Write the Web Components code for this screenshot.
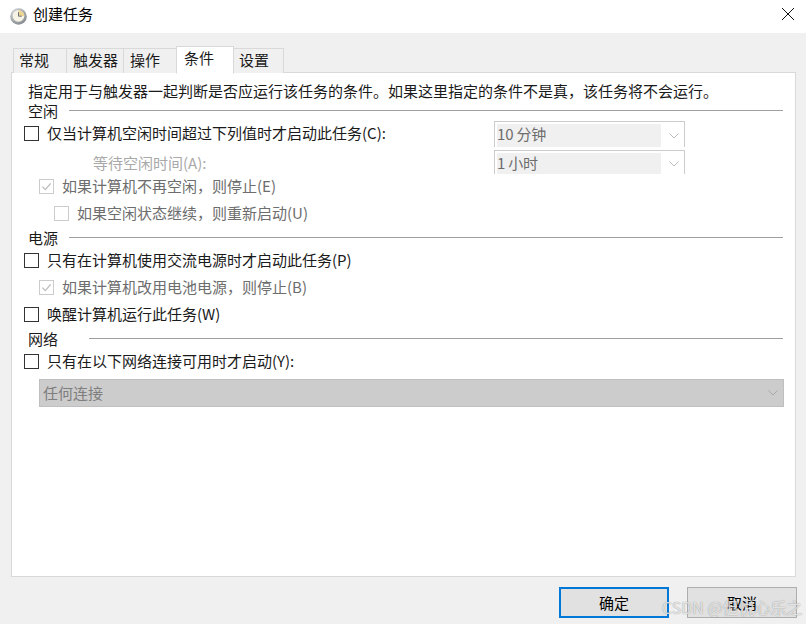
<!DOCTYPE html>
<html lang="zh-CN">
<head>
<meta charset="utf-8">
<title>创建任务</title>
<style>
  html, body { margin: 0; padding: 0; }
  body { font: 15px/20px "Noto Sans CJK SC", "Liberation Sans", sans-serif; color: #1a1a1a; }
</style>
</head>
<body>
<task-dialog>
  <title-bar slot="title">创建任务</title-bar>
  <tab-strip slot="tabs"></tab-strip>

  <intro-text>指定用于与触发器一起判断是否应运行该任务的条件。如果这里指定的条件不是真，该任务将不会运行。</intro-text>

  <section-head>空闲</section-head>
  <option-row style="--mt:2px">
    <check-box label="仅当计算机空闲时间超过下列值时才启动此任务(C):"></check-box>
    <combo-box slot="right" value="10 分钟" h="26" lh="20" style="margin-top:-2px"></combo-box>
  </option-row>
  <option-row style="--mt:10px">
    <span style="padding-left:69px;color:#a9a9a9">等待空闲时间(A):</span>
    <combo-box slot="right" value="1 小时" h="24" lh="20" style="margin-top:-3px"></combo-box>
  </option-row>
  <option-row style="--mt:3px"><check-box indent="15" disabled checked label="如果计算机不再空闲，则停止(E)"></check-box></option-row>
  <option-row style="--mt:7px"><check-box indent="30" disabled label="如果空闲状态继续，则重新启动(U)"></check-box></option-row>

  <section-head style="--mt:5px">电源</section-head>
  <option-row style="--mt:2px"><check-box label="只有在计算机使用交流电源时才启动此任务(P)"></check-box></option-row>
  <option-row style="--mt:7px"><check-box indent="15" disabled checked label="如果计算机改用电池电源，则停止(B)"></check-box></option-row>
  <option-row style="--mt:7px"><check-box label="唤醒计算机运行此任务(W)"></check-box></option-row>

  <section-head style="--mt:5px;--gap:31px">网络</section-head>
  <option-row style="--mt:2px"><check-box label="只有在以下网络连接可用时才启动(Y):"></check-box></option-row>
  <network-select value="任何连接"></network-select>

  <dlg-button slot="buttons" primary>确定</dlg-button>
  <dlg-button slot="buttons" disabled>取消</dlg-button>
</task-dialog>

<script>
class TaskDialog extends HTMLElement {
  constructor() {
    super();
    this.attachShadow({ mode: "open" }).innerHTML = `
      <style>
        :host {
          display: flex;
          flex-direction: column;
          position: relative;
          width: 806px;
          height: 624px;
          overflow: hidden;
          background: #f0f0f0;
        }
        .panel {
          display: flex;
          flex-direction: column;
          box-sizing: border-box;
          height: 505px;
          margin: -1px 10px 0 11px;
          padding: 8px 12px 0 12px;
          background: #fff;
          border: 1px solid #d9d9d9;
        }
        .buttons {
          display: flex;
          justify-content: flex-end;
          gap: 18px;
          padding: 10px 9px 0 0;
        }
        .mark {
          position: absolute;
          left: 662px;
          top: 597px;
          font-size: 16px;
          line-height: 20px;
          color: rgba(255,255,255,.75);
          text-shadow: 0 0 1px rgba(90,90,90,.75);
          white-space: nowrap;
        }
      </style>
      <slot name="title"></slot>
      <slot name="tabs"></slot>
      <div class="panel"><slot></slot></div>
      <div class="buttons"><slot name="buttons"></slot></div>
      <div class="mark">CSDN @但悦心乐之</div>
    `;
  }
}

class TitleBar extends HTMLElement {
  constructor() {
    super();
    this.attachShadow({ mode: "open" }).innerHTML = `
      <style>
        :host {
          display: flex;
          align-items: center;
          height: 33px;
          background: #fff;
          padding-left: 10px;
          color: #000;
        }
        .icon { width: 17px; height: 17px; margin-right: 6px; }
        .title { flex: 1; position: relative; top: -3px; }
        .close { width: 14px; height: 14px; margin-right: 11px; margin-top: -6px; }
      </style>
      <svg class="icon" viewBox="0 0 17 17">
        <defs>
          <radialGradient id="rim" cx=".35" cy=".3" r=".8">
            <stop offset="0" stop-color="#dfe1e3"/>
            <stop offset="1" stop-color="#7d8388"/>
          </radialGradient>
        </defs>
        <circle cx="8.500" cy="8.500" r="8.300" fill="url(#rim)"/>
        <circle cx="8.500" cy="8" r="5.800" fill="#f7f4e6"/>
        <path d="M8.500 2.200a5.800 5.800 0 0 1 5.800 5.800H8.500z" fill="#ecd592"/>
        <path d="M8.500 4.200v4h3.300" fill="none" stroke="#6a6f74" stroke-width="1"/>
      </svg>
      <span class="title"><slot></slot></span>
      <svg class="close" viewBox="0 0 14 14">
        <path d="M1 1l12 12M13 1L1 13" stroke="#111" stroke-width="1" fill="none"/>
      </svg>
    `;
  }
}

class TabStrip extends HTMLElement {
  constructor() {
    super();
    const tabs = [["常规", 54, 5, 0], ["触发器", 58, 6, 0], ["操作", 54, 6, 0], ["条件", 58, 7, 1], ["设置", 51, 5, 0]];
    const items = tabs.map(([text, w, pad, on]) =>
      `<div class="tab${on ? " on" : ""}" style="width:${w}px;padding-left:${pad}px">${text}</div>`).join("");
    this.attachShadow({ mode: "open" }).innerHTML = `
      <style>
        :host {
          display: flex;
          align-items: flex-end;
          height: 40px;
          padding-left: 13px;
          position: relative;
          z-index: 1;
        }
        .tab {
          box-sizing: border-box;
          height: 25px;
          line-height: 22px;
          background: #f0f0f0;
          border: 1px solid #d9d9d9;
          border-bottom: 0;
          margin-right: -1px;
          color: #1a1a1a;
          white-space: nowrap;
        }
        .tab.on {
          height: 28px;
          line-height: 22px;
          background: #fff;
          margin-bottom: -1px;
          position: relative;
          z-index: 1;
          border-bottom: 1px solid #fff;
        }
      </style>
      ${items}
    `;
  }
}

class IntroText extends HTMLElement {
  constructor() {
    super();
    this.attachShadow({ mode: "open" }).innerHTML = `
      <style>
        :host { display: block; padding-left: 4px; height: 20px; white-space: nowrap; }
      </style>
      <slot></slot>
    `;
  }
}

class SectionHead extends HTMLElement {
  constructor() {
    super();
    this.attachShadow({ mode: "open" }).innerHTML = `
      <style>
        :host {
          display: flex;
          align-items: center;
          height: 20px;
          margin-top: var(--mt, 0);
          padding-left: 4px;
          white-space: nowrap;
        }
        .rule {
          flex: 1;
          height: 1px;
          margin-left: var(--gap, 11px);
          margin-top: -2px;
          background: #a0a0a0;
        }
      </style>
      <slot></slot>
      <div class="rule"></div>
    `;
  }
}

class OptionRow extends HTMLElement {
  constructor() {
    super();
    this.attachShadow({ mode: "open" }).innerHTML = `
      <style>
        :host {
          display: flex;
          align-items: center;
          justify-content: space-between;
          height: 20px;
          margin-top: var(--mt, 0);
          white-space: nowrap;
        }
        .right { margin-right: 98px; align-self: flex-start; }
      </style>
      <div><slot></slot></div>
      <div class="right"><slot name="right"></slot></div>
    `;
  }
}

class CheckBox extends HTMLElement {
  constructor() {
    super();
    const indent = this.getAttribute("indent") || 0;
    const off = this.hasAttribute("disabled");
    const tick = this.hasAttribute("checked")
      ? `<svg viewBox="0 0 13 13"><path d="M2.400 6.600l2.900 3 5.400-6.200" fill="none" stroke="#bcbcbc" stroke-width="1.300"/></svg>`
      : "";
    this.attachShadow({ mode: "open" }).innerHTML = `
      <style>
        :host {
          display: flex;
          align-items: center;
          padding-left: ${indent}px;
          color: ${off ? "#6d6d6d" : "#1a1a1a"};
        }
        .box {
          box-sizing: border-box;
          width: 15px;
          height: 15px;
          margin-right: 8px;
          border: 1px solid ${off ? "#cccccc" : "#333333"};
          background: #fff;
        }
        svg { display: block; }
      </style>
      <div class="box">${tick}</div>
      <span>${this.getAttribute("label")}</span>
    `;
  }
}

class ComboBox extends HTMLElement {
  constructor() {
    super();
    const h = this.getAttribute("h");
    this.attachShadow({ mode: "open" }).innerHTML = `
      <style>
        :host {
          display: block;
          box-sizing: border-box;
          width: 191px;
          height: ${h}px;
          padding: 2px 0 0 2px;
          border: 1px solid #cccccc;
          border-bottom: 0;
          color: #6d6d6d;
        }
        .wrap { display: flex; align-items: center; height: 100%; }
        .val {
          width: 164px;
          height: 100%;
          line-height: ${this.getAttribute("lh")}px;
          background: #f0f0f0;
          box-sizing: border-box;
          letter-spacing: -.2px;
          white-space: pre;
        }
        svg { width: 10px; height: 6px; margin-left: 8px; }
      </style>
      <div class="wrap">
        <div class="val">${this.getAttribute("value")}</div>
        <svg viewBox="0 0 10 6"><path d="M.5.5l4.500 4.500L9.500.5" fill="none" stroke="#bdbdbd"/></svg>
      </div>
    `;
  }
}

class NetworkSelect extends HTMLElement {
  constructor() {
    super();
    this.attachShadow({ mode: "open" }).innerHTML = `
      <style>
        :host {
          display: flex;
          align-items: center;
          justify-content: space-between;
          box-sizing: border-box;
          height: 28px;
          margin: 8px -1px 0 15px;
          padding: 0 5px 0 3px;
          background: #cccccc;
          border: 1px solid #bfbfbf;
          color: #7e7e7e;
        }
        svg { width: 10px; height: 6px; }
      </style>
      <span>${this.getAttribute("value")}</span>
      <svg viewBox="0 0 10 6"><path d="M.5.5l4.500 4.500L9.500.5" fill="none" stroke="#a8a8a8"/></svg>
    `;
  }
}

class DlgButton extends HTMLElement {
  constructor() {
    super();
    const primary = this.hasAttribute("primary");
    this.attachShadow({ mode: "open" }).innerHTML = `
      <style>
        :host {
          display: flex;
          align-items: center;
          justify-content: center;
          box-sizing: border-box;
          width: 110px;
          height: 31px;
          background: #e1e1e1;
          color: #000;
          border: ${primary ? "2px solid #0078d7" : "1px solid #adadad"};
        }
      </style>
      <slot></slot>
    `;
  }
}

customElements.define("task-dialog", TaskDialog);
customElements.define("title-bar", TitleBar);
customElements.define("tab-strip", TabStrip);
customElements.define("intro-text", IntroText);
customElements.define("section-head", SectionHead);
customElements.define("option-row", OptionRow);
customElements.define("check-box", CheckBox);
customElements.define("combo-box", ComboBox);
customElements.define("network-select", NetworkSelect);
customElements.define("dlg-button", DlgButton);
</script>
</body>
</html>
